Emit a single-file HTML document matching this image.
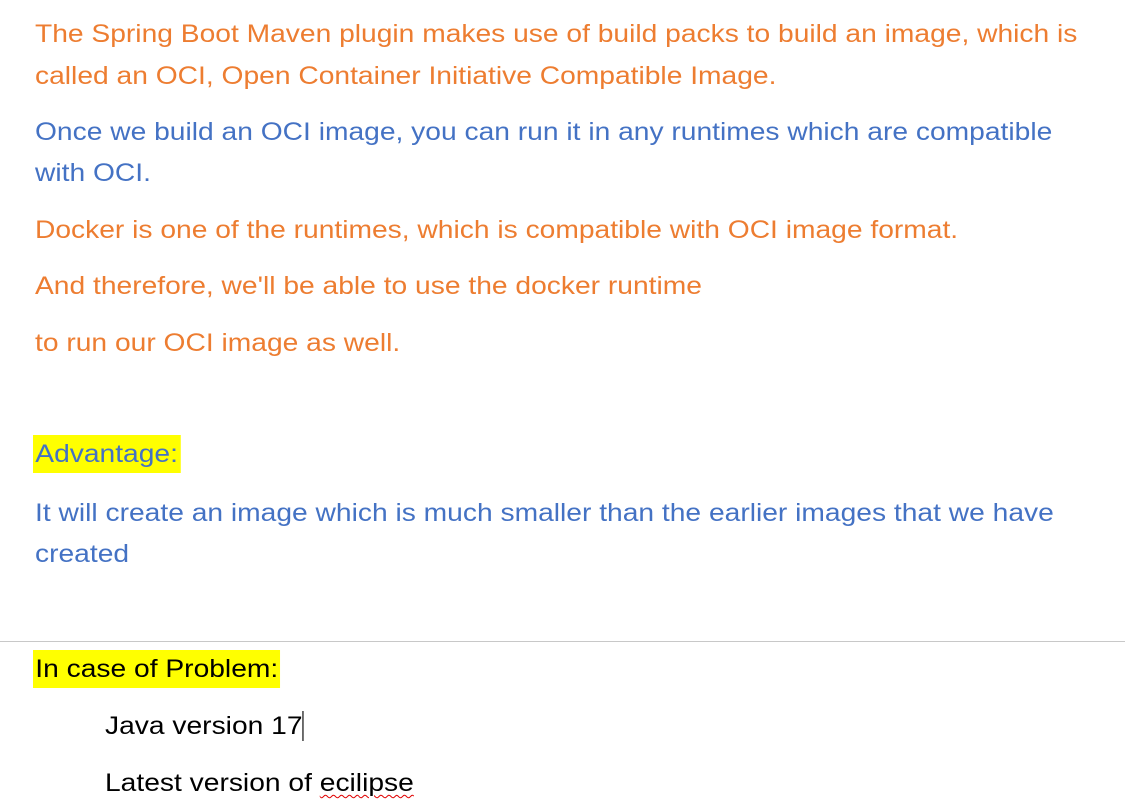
<!DOCTYPE html>
<html><head><meta charset="utf-8"><style>
html,body{margin:0;padding:0;background:#fff;width:1125px;height:809px;overflow:hidden}
body{font-family:"Liberation Sans",sans-serif;font-size:25px;position:relative}
.l{position:absolute;white-space:nowrap;line-height:38px;height:38px;transform:scaleX(1.128);transform-origin:0 0}
.o{color:#ED7D31}.b{color:#4472C4}.k{color:#000}
.h{background:#FFFF00}
hr{position:absolute;left:0;top:641px;width:1125px;margin:0;border:0;border-top:1px solid #c8c8c8}
.sq{text-decoration:underline wavy #e00000;text-decoration-thickness:1px;text-underline-offset:3px}
</style></head><body>
<div class="l o" style="left:35px;top:15px">The Spring Boot Maven plugin makes use of build packs to build an image, which is</div>
<div class="l o" style="left:35px;top:57px">called an OCI, Open Container Initiative Compatible Image.</div>
<div class="l b" style="left:35px;top:113px">Once we build an OCI image, you can run it in any runtimes which are compatible</div>
<div class="l b" style="left:35px;top:154px">with OCI.</div>
<div class="l o" style="left:35px;top:211px">Docker is one of the runtimes, which is compatible with OCI image format.</div>
<div class="l o" style="left:35px;top:267px">And therefore, we'll be able to use the docker runtime</div>
<div class="l o" style="left:35px;top:324px">to run our OCI image as well.</div>
<div class="l b h" style="left:33px;top:435px;padding:0 2px">Advantage:</div>
<div class="l b" style="left:35px;top:494px">It will create an image which is much smaller than the earlier images that we have</div>
<div class="l b" style="left:35px;top:535px">created</div>
<hr>
<div class="l k h" style="left:33px;top:650px;padding:0 2px">In case of Problem:</div>
<div class="l k" style="left:105px;top:707px">Java version 17<span style="display:inline-block;width:1px;height:30px;background:#000;vertical-align:-7px"></span></div>
<div class="l k" style="left:105px;top:764px">Latest version of <span class="sq">ecilipse</span></div>
</body></html>
